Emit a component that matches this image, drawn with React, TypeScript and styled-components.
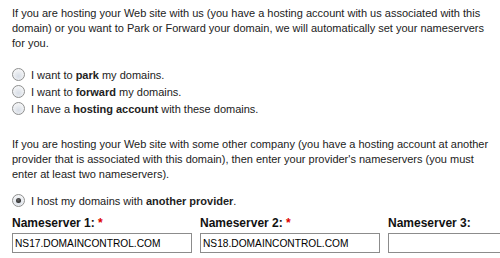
import React from "react";
import styled, { createGlobalStyle } from "styled-components";

const Global = createGlobalStyle`
  html, body { margin: 0; padding: 0; background: #fff; }
  body { font-family: "Liberation Sans", Arial, sans-serif; font-size: 11px; color: #222; overflow: hidden; }
`;

const Page = styled.div`
  width: 500px;
  height: 258px;
  padding: 6px 0 0 12px;
  box-sizing: border-box;
  overflow: hidden;
`;

const Para = styled.p<{ $mt?: number }>`
  margin: ${(p) => p.$mt ?? 0}px 0 0 0;
  width: 484px;
  line-height: 15px;
  font-size: 11px;
`;

const RadioGroup = styled.div<{ $mt: number }>`
  margin-top: ${(p) => p.$mt}px;
  display: flex;
  flex-direction: column;
`;

const RadioRow = styled.label`
  display: flex;
  align-items: center;
  height: 17px;
  gap: 6px;
  white-space: nowrap;
  font-size: 11px;
`;

const RadioDot = styled.span<{ $checked?: boolean }>`
  position: relative;
  width: 13px;
  height: 13px;
  border-radius: 50%;
  box-sizing: border-box;
  border: 1px solid #8e8f8f;
  background: radial-gradient(circle at 50% 65%, #d7dde6 0%, #eef0f3 55%, #fbfbfb 100%);
  flex: none;
  &::after {
    content: "";
    display: ${(p) => (p.$checked ? "block" : "none")};
    position: absolute;
    left: 3px;
    top: 3px;
    width: 5px;
    height: 5px;
    border-radius: 50%;
    background: radial-gradient(circle at 45% 40%, #6a6a6a 0%, #222 80%);
  }
`;

const Fields = styled.div`
  margin-top: 7px;
  display: grid;
  grid-template-columns: 180px 180px 180px;
  column-gap: 8px;
`;

const Field = styled.div`
  display: flex;
  flex-direction: column;
  gap: 2px;
`;

const Label = styled.div`
  font-weight: bold;
  font-size: 12px;
  line-height: 15px;
  color: #111;
  white-space: nowrap;
`;

const Req = styled.span`
  color: #d00;
  font-weight: bold;
`;

const Input = styled.input`
  width: 180px;
  height: 20px;
  box-sizing: border-box;
  border: 1px solid #8c8c8c;
  padding: 0 2px;
  font-family: "Liberation Sans", Arial, sans-serif;
  font-size: 10.2px;
  color: #000;
  background: #fff;
  outline: none;
`;

export default function App() {
  return (
    <>
      <Global />
      <Page>
        <Para>
          If you are hosting your Web site with us (you have a hosting account with us associated with this
          domain) or you want to Park or Forward your domain, we will automatically set your nameservers
          for you.
        </Para>
        <RadioGroup $mt={15}>
          <RadioRow>
            <RadioDot />
            <span>
              I want to <b>park</b> my domains.
            </span>
          </RadioRow>
          <RadioRow>
            <RadioDot />
            <span>
              I want to <b>forward</b> my domains.
            </span>
          </RadioRow>
          <RadioRow>
            <RadioDot />
            <span>
              I have a <b>hosting account</b> with these domains.
            </span>
          </RadioRow>
        </RadioGroup>
        <Para $mt={20}>
          If you are hosting your Web site with some other company (you have a hosting account at another
          provider that is associated with this domain), then enter your provider's nameservers (you must
          enter at least two nameservers).
        </Para>
        <RadioGroup $mt={10}>
          <RadioRow>
            <RadioDot $checked />
            <span>
              I host my domains with <b>another provider</b>.
            </span>
          </RadioRow>
        </RadioGroup>
        <Fields>
          <Field>
            <Label>
              Nameserver 1: <Req>*</Req>
            </Label>
            <Input defaultValue="NS17.DOMAINCONTROL.COM" />
          </Field>
          <Field>
            <Label>
              Nameserver 2: <Req>*</Req>
            </Label>
            <Input defaultValue="NS18.DOMAINCONTROL.COM" />
          </Field>
          <Field>
            <Label>Nameserver 3:</Label>
            <Input defaultValue="" />
          </Field>
        </Fields>
      </Page>
    </>
  );
}
